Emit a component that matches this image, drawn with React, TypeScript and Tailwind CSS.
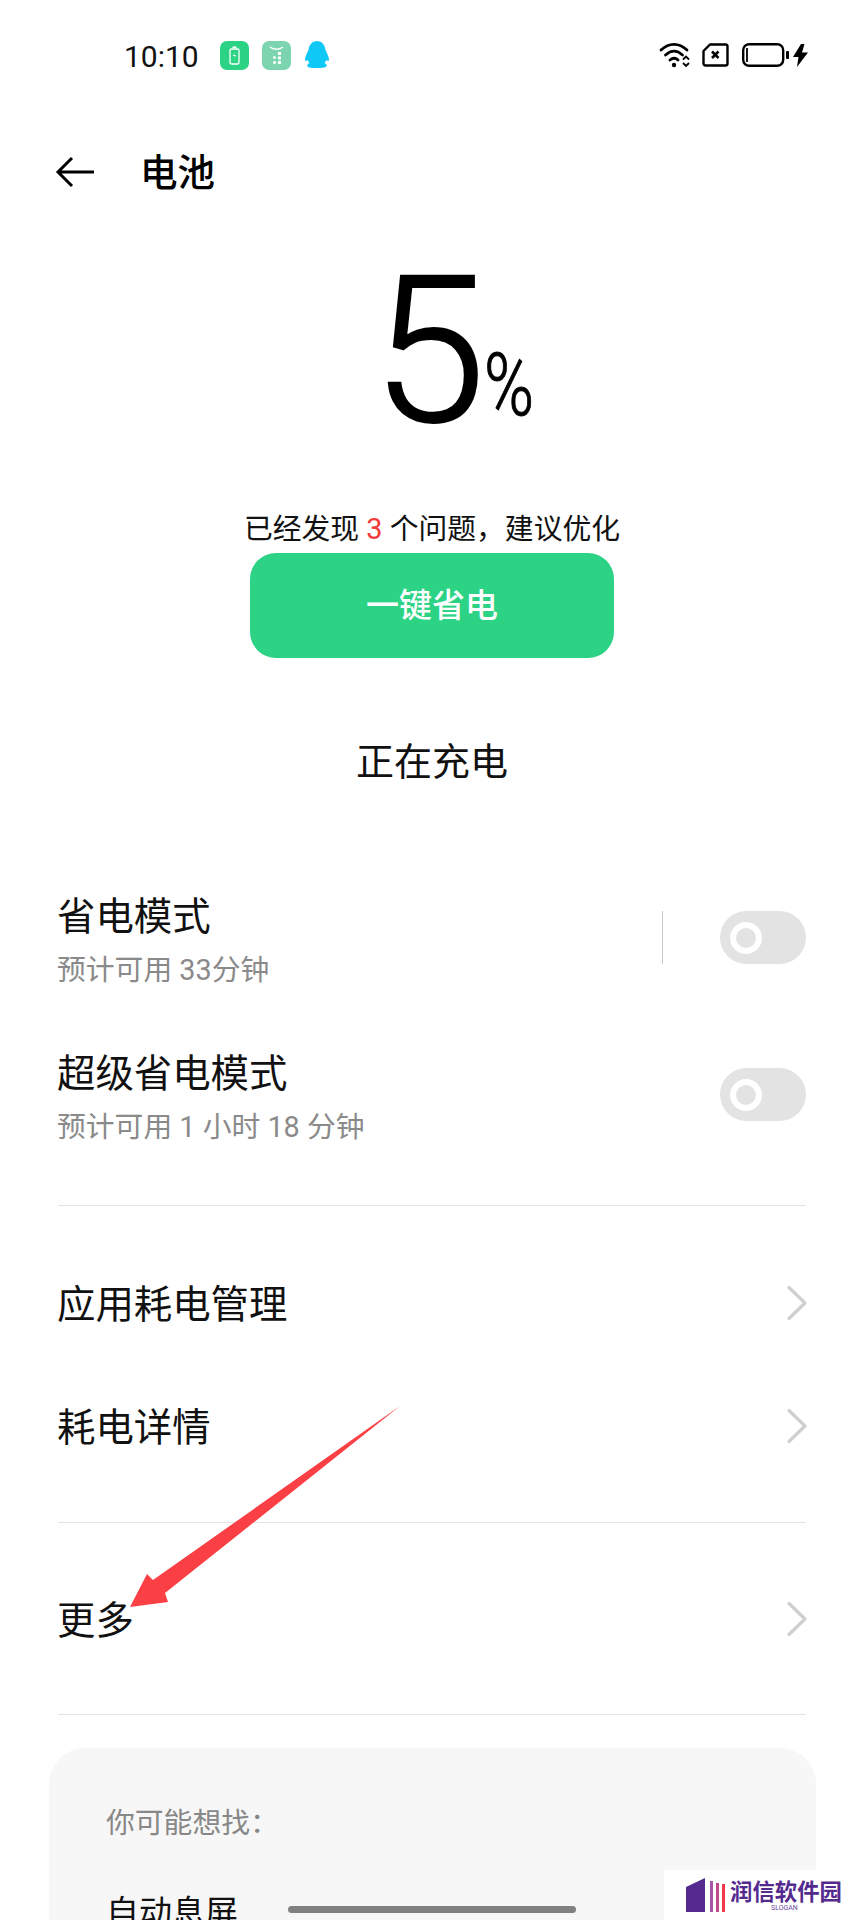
import React from 'react';

const FONT = 'font-["Roboto","Noto_Sans_CJK_SC",sans-serif]';

function AppIcons() {
  return (
    <div className="flex items-center ml-[21px]">
      <svg width="29" height="29" viewBox="0 0 29 29">
        <rect width="29" height="29" rx="7" fill="#2dd385" />
        <rect x="10" y="8" width="9" height="15" rx="1.5" fill="none" stroke="#fff" strokeWidth="1.3" />
        <rect x="12.5" y="5.5" width="4" height="1.5" fill="#fff" />
        <path d="M15 11l-2 4h2l-1 3 2-4h-2z" fill="#fff" />
      </svg>
      <svg className="ml-[13px]" width="29" height="29" viewBox="0 0 29 29">
        <rect width="29" height="29" rx="7" fill="#7cd5ae" />
        <path d="M8 6c3 3 10 3 13 0" fill="none" stroke="#fff" strokeWidth="1.6" />
        <rect x="16" y="11" width="3" height="3" fill="#fff" />
        <rect x="16" y="15.500" width="3" height="3" fill="#fff" />
        <rect x="16" y="20" width="3" height="3" fill="#fff" />
        <rect x="11" y="20" width="3" height="3" rx="1.5" fill="#fff" />
        <rect x="11" y="15.500" width="3" height="2" fill="#fff" />
      </svg>
      <svg className="ml-[13px]" width="26" height="28" viewBox="0 0 26 28">
        <path
          d="M13 0c5 0 8 4 8.500 9 1 2 3 6 3.500 9 .3 2-1 2.500-2.500 1-.5 1-1 2-2 3 2 .7 2.500 2 2 3.500-1 1-5 1.500-9.500 1.500S4.500 27 3.500 25.500c-.5-1.500 0-2.800 2-3.500-1-1-1.500-2-2-3-1.500 1.500-2.800 1-2.500-1 .5-3 2.500-7 3.500-9C5 4 8 0 13 0z"
          fill="#10c8f5"
        />
      </svg>
    </div>
  );
}

function SystemIcons() {
  return (
    <div className="flex items-center ml-auto mr-[56px] text-black">
      <svg width="32" height="26" viewBox="0 0 32 26" fill="none" stroke="#000" strokeLinecap="round">
        <path d="M2 8c8-7.500 18-7.500 26 0" strokeWidth="2.800" />
        <path d="M6.500 13c5.500-5 11.500-5 17 0" strokeWidth="2.800" />
        <path d="M11 18c3-2.500 5.500-2.500 8 0" strokeWidth="2.800" />
        <circle cx="15" cy="23" r="2.200" fill="#000" stroke="none" />
        <path d="M24.500 17l2.500-2.500 2.500 2.500M24.500 21.500l2.500 2.500 2.500-2.500" strokeWidth="1.800" />
      </svg>
      <svg className="ml-[11px]" width="27" height="24" viewBox="0 0 27 24" fill="none" stroke="#000" strokeWidth="2.400">
        <path d="M8 1.500h15.500a2 2 0 0 1 2 2v17a2 2 0 0 1-2 2h-20a2 2 0 0 1-2-2V8z" strokeLinejoin="round" />
        <path d="M10 8.500l6.500 6.500M16.500 8.500L10 15" strokeWidth="2.600" />
      </svg>
      <svg className="ml-[13px]" width="48" height="24" viewBox="0 0 48 24" fill="none" stroke="#000">
        <rect x="1.200" y="1.200" width="40" height="21.600" rx="6" strokeWidth="2.400" />
        <path d="M5 5v14" strokeWidth="1.800" />
        <rect x="44" y="8" width="3" height="8" rx="1" fill="#000" stroke="none" />
      </svg>
      <svg className="ml-[3px]" width="15" height="23" viewBox="0 0 15 23">
        <path d="M8 0L0 13h5.500L4 23l11-14.500H9L11.500 0z" fill="#000" />
      </svg>
    </div>
  );
}

function Toggle() {
  return (
    <div className="w-[86px] h-[53px] rounded-full bg-[#e3e3e3] flex items-center pl-[10px]">
      <div className="w-[32px] h-[32px] rounded-full border-[6px] border-white" />
    </div>
  );
}

function ModeRow({ title, sub, split }: { title: string; sub: string; split?: boolean }) {
  return (
    <div className="flex items-start h-[94px]">
      <div className="flex-1 -ml-px">
        <div className="h-[46px] leading-[50px] text-[38.400px] text-[#111]">{title}</div>
        <div className="mt-[12px] h-[36px] leading-[40px] text-[28.800px] text-[#8a8a8a]">{sub}</div>
      </div>
      {split && <div className="mt-[19px] w-px h-[53px] bg-[#c8c8c8] mr-[57px]" />}
      <div className="mt-[19px]">
        <Toggle />
      </div>
    </div>
  );
}

function ListRow({ title }: { title: string }) {
  return (
    <div className="flex items-center justify-between h-[122px]">
      <span className="-ml-px pt-[3px] text-[38.400px] text-[#111]">{title}</span>
      <svg className="-mr-[2px]" width="22" height="36" viewBox="0 0 22 36" fill="none">
        <path d="M3 2.500L19 18 3 33.500" stroke="#cfcfcf" strokeWidth="3.200" strokeLinecap="round" strokeLinejoin="round" />
      </svg>
    </div>
  );
}

function Divider() {
  return <div className="h-px bg-[#e4e4e4]" />;
}

export default function App() {
  return (
    <div className={`relative w-[864px] h-[1920px] overflow-hidden bg-white text-black ${FONT}`}>
      <div className="flex items-center h-[110px] pl-[124px]">
        <span className="pt-[2px] text-[30px] text-[#111]">10:10</span>
        <AppIcons />
        <SystemIcons />
      </div>

      <div className="flex items-center h-[124px] pl-[55px]">
        <svg width="39" height="32" viewBox="0 0 39 32" fill="none" stroke="#000" strokeWidth="3">
          <path d="M39 16H3M17 2L3 16l14 14" />
        </svg>
        <span className="ml-[46px] pt-[2px] text-[37.500px] font-medium">电池</span>
      </div>

      <div className="flex items-baseline h-[276px] pt-[2px] pl-[372px]">
        <span className="text-[205px] leading-[230px] font-light [-webkit-text-stroke:2px_#000]">5</span>
        <span className="ml-[-2px] w-[50px] -translate-y-[6px] origin-[0_100%] scale-x-[.77] text-[88px] leading-[88px] font-light [-webkit-text-stroke:1px_#000]">%</span>
      </div>

      <div className="h-[34px] leading-[38px] text-center text-[28.800px] text-[#111]">
        已经发现 <span className="text-[#f23a3a]">3</span> 个问题，建议优化
      </div>

      <button className="block mx-auto mt-[9px] w-[364px] h-[105px] rounded-[26px] bg-[#2dd385] text-white text-[33px] font-medium">
        一键省电
      </button>

      <div className="mt-[80px] h-[46px] leading-[49px] text-center text-[38px] text-[#111]">正在充电</div>

      <div className="mt-[108px] mx-[58px]">
        <ModeRow title="省电模式" sub="预计可用 33分钟" split />
        <div className="mt-[63px]">
          <ModeRow title="超级省电模式" sub="预计可用 1 小时 18 分钟" />
        </div>
        <div className="mt-[62px]">
          <Divider />
        </div>
        <div className="mt-[36px]">
          <ListRow title="应用耗电管理" />
          <div className="mt-px">
            <ListRow title="耗电详情" />
          </div>
        </div>
        <div className="mt-[35px]">
          <Divider />
        </div>
        <div className="mt-[35px]">
          <ListRow title="更多" />
        </div>
        <div className="mt-[34px]">
          <Divider />
        </div>
      </div>

      <div className="mt-[33px] ml-[49px] w-[767px] h-[400px] rounded-[36px] bg-[#f7f7f7] pt-[55px] pl-[57px]">
        <div className="h-[36px] leading-[40px] text-[28.800px] text-[#888]">你可能想找：</div>
        <div className="mt-[53px] h-[40px] leading-[42px] text-[33px] text-[#111]">自动息屏</div>
      </div>

      {/* annotation arrow drawn over the screenshot */}
      <svg className="absolute left-0 top-0 pointer-events-none" width="864" height="1920" viewBox="0 0 864 1920">
        <path d="M400 1406L165 1593L168 1602L130 1607L147 1574L153 1580Z" fill="#fb4045" />
      </svg>

      <div className="absolute left-[288px] top-[1906px] w-[288px] h-[7px] rounded-full bg-[#808080]" />

      <div className="absolute left-[664px] top-[1870px] w-[200px] h-[50px] bg-white">
        <svg className="absolute left-[21px] top-[8px]" width="41" height="34" viewBox="0 0 41 34">
          <path d="M1 9L20 0V34H1Z" fill="#552a8e" />
          <rect x="25" y="3" width="3" height="31" fill="#a855a8" />
          <rect x="31" y="5" width="3" height="29" fill="#c04a8a" />
          <rect x="37" y="6" width="3" height="28" fill="#f0384a" />
        </svg>
        <div className="absolute left-[66px] top-[10px] text-[22.400px] leading-[24px] font-bold text-[#552a8e] whitespace-nowrap">润信软件园</div>
        <div className="absolute left-[107px] top-[34px] text-[7px] leading-[9px] text-[#6b4aa0]">SLOGAN</div>
      </div>
    </div>
  );
}
